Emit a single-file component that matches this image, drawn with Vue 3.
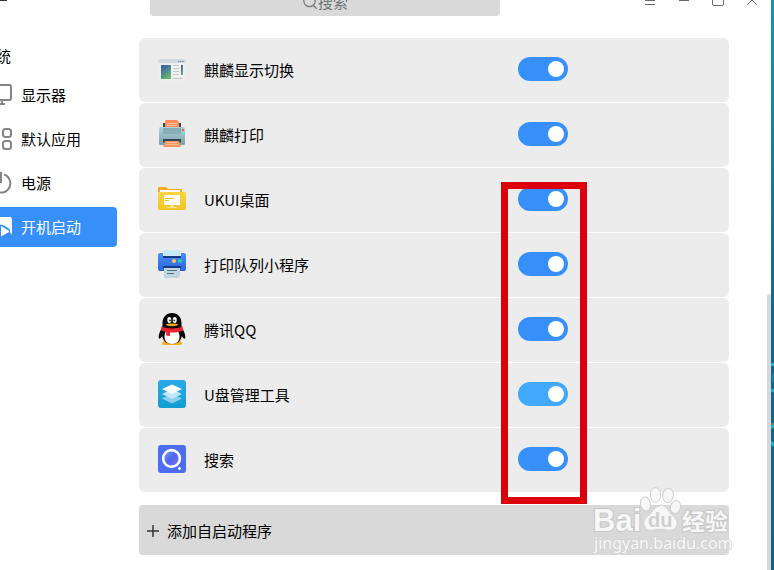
<script setup>
import { ref } from 'vue'

const navItems = [
  { id: 'display', label: '显示器' },
  { id: 'apps', label: '默认应用' },
  { id: 'power', label: '电源' },
  { id: 'boot', label: '开机启动', active: true },
]

const programs = ref([
  { id: 'kydisplay', name: '麒麟显示切换', on: true },
  { id: 'kyprint', name: '麒麟打印', on: true },
  { id: 'desktop', name: 'UKUI桌面', on: true },
  { id: 'queue', name: '打印队列小程序', on: true },
  { id: 'qq', name: '腾讯QQ', on: true },
  { id: 'udisk', name: 'U盘管理工具', on: true, hovered: true },
  { id: 'search', name: '搜索', on: true },
])

const query = ref('')
</script>

<template>
  <div class="desktop">
    <div class="window">
      <aside class="sidebar">
        <div class="menu-edge"></div>
        <h2 class="group-title">系统</h2>
        <nav class="nav">
          <a v-for="item in navItems" :key="item.id" href="#" class="nav-item" :class="{ active: item.active }">
            <svg v-if="item.id === 'display'" class="nav-icon" viewBox="0 0 20 24">
              <path d="M1 3.5a1.500 1.500 0 0 1 1.500-1.500h15a1.500 1.500 0 0 1 1.500 1.500v12a1.500 1.500 0 0 1-1.500 1.500h-15a1.500 1.500 0 0 1-1.500-1.500zM10 17v4M6 21h7" fill="none" stroke="#858585" stroke-width="2" />
            </svg>
            <svg v-else-if="item.id === 'apps'" class="nav-icon" viewBox="0 0 20 24">
              <g fill="none" stroke="#858585" stroke-width="2">
                <rect x="-1" y="2" width="8" height="8" rx="2.500" />
                <rect x="11" y="2" width="8" height="8" rx="2.500" />
                <rect x="-1" y="14" width="8" height="8" rx="2.500" />
                <rect x="11" y="14" width="8" height="8" rx="2.500" />
              </g>
            </svg>
            <svg v-else-if="item.id === 'power'" class="nav-icon" viewBox="0 0 20 24">
              <path d="M12 3.500a9.300 9.300 0 1 1-6 0M9 1v11" fill="none" stroke="#858585" stroke-width="2" />
            </svg>
            <svg v-else class="nav-icon" viewBox="0 0 20 24">
              <path d="M1 4a2 2 0 0 1 2-2h15a2 2 0 0 1 2 2v14c0 1.500-.6 2.500-2 3H3a2 2 0 0 1-2-2z" fill="#fff" />
              <path d="M0 14.500c3-4.500 7-5.500 10.500-4.500 3.500 1.200 6 3.200 9 6v6H0z" fill="#3790fa" />
              <path d="M9 11l7.500 4.500c.8.500.8 1.200 0 1.700L9 21.500z" fill="#fff" />
              <path d="M18 14.500L20 16v3l-2-1.500z" fill="#fff" />
            </svg>
            <span>{{ item.label }}</span>
          </a>
        </nav>
      </aside>

      <main class="content">
        <header class="topbar">
          <label class="search">
            <svg class="search-icon" viewBox="0 0 16 16">
              <path d="M11.500 11.500l3.200 3.200" stroke="#777" stroke-width="1.300" />
              <circle cx="7.500" cy="7" r="5.700" fill="none" stroke="#777" stroke-width="1.200" />
            </svg>
            <input v-model="query" class="search-input" type="text" placeholder="搜索" aria-label="搜索" />
          </label>
          <div class="controls">
            <button class="control" aria-label="菜单">
              <svg viewBox="0 0 12 12"><path d="M1 2.500h10M1 6.500h10M1 10.500h10" stroke="#6a6a6a" /></svg>
            </button>
            <button class="control" aria-label="最小化">
              <svg viewBox="0 0 12 12"><path d="M1 6.500h10" stroke="#6a6a6a" /></svg>
            </button>
            <button class="control" aria-label="最大化">
              <svg viewBox="0 0 12 12"><rect x=".5" y=".5" width="11" height="11" rx="1.500" fill="none" stroke="#6a6a6a" /></svg>
            </button>
            <button class="control" aria-label="关闭">
              <svg viewBox="0 0 12 12"><path d="M1 1l10 10M11 1L1 11" stroke="#6a6a6a" /></svg>
            </button>
          </div>
        </header>

        <section class="panel">
          <ul class="list">
            <li v-for="p in programs" :key="p.id" class="row">
              <svg v-if="p.id === 'kydisplay'" class="app-icon" viewBox="0 0 28 28">
                <defs>
                  <linearGradient id="gDisp" x1="0" y1="0" x2=".6" y2="1"><stop offset=".2" stop-color="#3c67a5" /><stop offset="1" stop-color="#67b86d" /></linearGradient>
                </defs>
                <path d="M1 8h26v18H1z" fill="#efefef" />
                <path d="M0 8V7a3 3 0 0 1 3-3h22a3 3 0 0 1 3 3v1z" fill="#d1d9e1" />
                <path d="M20 6.500h1.300M22.200 6.500h1.300M24.400 6.500h1.300" stroke="#61758d" stroke-width="1.200" />
                <path d="M3 10h10v14H3z" fill="url(#gDisp)" />
                <path d="M15 10.500h6M15 13.500h6M15 16.500h6M15 19.500h6M15 23.500h10" stroke="#c9c9c9" />
                <path d="M23 10h2v10h-2z" fill="url(#gDisp)" />
              </svg>
              <svg v-else-if="p.id === 'kyprint'" class="app-icon" viewBox="0 0 28 28">
                <defs>
                  <linearGradient id="gPrn" x1="0" y1="0" x2="0" y2="1"><stop stop-color="#b3d3d9" /><stop offset="1" stop-color="#78a0aa" /></linearGradient>
                </defs>
                <path d="M5 3h18v5H5z" fill="#334750" />
                <path d="M7 8V1.500A1.500 1.500 0 0 1 8.500 0H19l2 2v6z" fill="#ff8c5c" />
                <path d="M9 3.500h10M9 5.500h10" stroke="#ffc09e" />
                <path d="M1 8.500A1.500 1.500 0 0 1 2.500 7h23A1.500 1.500 0 0 1 27 8.500v15a1.500 1.500 0 0 1-1.500 1.500h-23A1.500 1.500 0 0 1 1 23.500z" fill="url(#gPrn)" />
                <path d="M5 8h18v6H5z" fill="#89adb6" />
                <path d="M24 9h2v2h-2z" fill="#ff5757" /><path d="M24 12h2v2h-2z" fill="#38ffd1" />
                <path d="M5 19h18v3l-2 2H7l-2-2z" fill="#334750" />
                <path d="M7 21h14l2 6H5z" fill="#ff965f" />
                <path d="M9 22.500h10M8 24.500h12" stroke="#ffc09e" />
              </svg>
              <svg v-else-if="p.id === 'desktop'" class="app-icon" viewBox="0 0 28 28">
                <defs>
                  <linearGradient id="gFold" x1="0" y1="0" x2="0" y2="1"><stop stop-color="#f9d541" /><stop offset="1" stop-color="#f2c325" /></linearGradient>
                </defs>
                <path d="M0 2h8l2 2h14v9H0z" fill="#f6a923" />
                <path d="M2 5h20v5H2z" fill="#fff" />
                <path d="M0 7h27a1 1 0 0 1 1 1v15a2 2 0 0 1-2 2H2a2 2 0 0 1-2-2z" fill="url(#gFold)" />
                <path d="M6 10h16v10H6z" fill="#fffdf2" />
                <path d="M7 13.500h9M7 15.500h4" stroke="#edbd22" />
                <path d="M12.500 20h3v2h-3zM9 22h10v1H9z" fill="#fbe69a" />
              </svg>
              <svg v-else-if="p.id === 'queue'" class="app-icon" viewBox="0 0 28 28">
                <defs>
                  <linearGradient id="gQueue" x1="0" y1="0" x2="0" y2="1"><stop stop-color="#4e8ff7" /><stop offset="1" stop-color="#2964dd" /></linearGradient>
                </defs>
                <path d="M2 3h3v4h18V3h3a2 2 0 0 1 2 2v14a2 2 0 0 1-2 2H2a2 2 0 0 1-2-2V5a2 2 0 0 1 2-2z" fill="url(#gQueue)" />
                <path d="M5 6h18v2H5zM5 16h18v2H5z" fill="#153b87" />
                <path d="M6 0h16v6H6z" fill="#c8e9f6" />
                <circle cx="16" cy="11" r="2.100" fill="#ffc653" /><circle cx="22" cy="11" r="2.100" fill="#20d5a1" />
                <path d="M6 18h16v8l-2 2H6z" fill="#bdd6df" />
                <path d="M9 20.500h10M9 23.500h7" stroke="#586d7d" />
              </svg>
              <svg v-else-if="p.id === 'qq'" class="app-icon tall" viewBox="0 0 28 32">
                <path d="M4 30.500c0-2 3-3 6-3h8c3 0 6 1 6 3 0 1-2 1.500-4 1.500H8c-2 0-4-.5-4-1.500z" fill="#f8ad15" />
                <path d="M14 0C8 0 4.500 4.500 4.500 10c0 2 0 4-.8 5.500C1.500 19 .5 22 .7 24.500c.2 2.200 1.800 1.500 3.500-1.500C5 28 8.500 31 14 31s9-3 9.800-8c1.700 3 3.300 3.700 3.500 1.500.2-2.500-.8-5.500-3-9-.8-1.500-.8-3.500-.8-5.500C23.500 4.500 20 0 14 0z" fill="#080808" />
                <path d="M14 16c-5 0-7.500 3-7.500 7.500S9 31 14 31s7.500-3 7.500-7.500S19 16 14 16z" fill="#fff" />
                <ellipse cx="11.300" cy="7" rx="2" ry="3" fill="#fff" /><ellipse cx="16.700" cy="7" rx="2" ry="3" fill="#fff" />
                <circle cx="12" cy="7.300" r=".9" fill="#111" /><circle cx="16.200" cy="7.300" r=".9" fill="#111" />
                <path d="M7.500 11.500c2-1.500 11-1.500 13 0-1.500 2.200-11.500 2.200-13 0z" fill="#f8ad15" />
                <path d="M3.500 13.500c6 2.500 15 2.500 21 0l.7 4c-4 1.800-8.700 2.300-13.200 2v3.500l-4-.5.300-3.500c-2-.4-4-1-5.500-1.800z" fill="#e9242e" />
              </svg>
              <svg v-else-if="p.id === 'udisk'" class="app-icon" viewBox="0 0 28 28">
                <defs>
                  <linearGradient id="gDisk" x1="0" y1="0" x2="0" y2="1"><stop stop-color="#2ba9e8" /><stop offset="1" stop-color="#139fd2" /></linearGradient>
                </defs>
                <rect width="28" height="28" rx="3" fill="url(#gDisk)" />
                <path d="M14 14l10 4.500L14 23.500 4 18.500z" fill="#8bd1ee" />
                <path d="M14 9l10 5-10 5-10-5z" fill="#c2e7f6" />
                <path d="M14 4.500L24 9l-10 5L4 9z" fill="#fff" />
              </svg>
              <svg v-else class="app-icon" viewBox="0 0 28 28">
                <defs>
                  <linearGradient id="gLens" x1="0" y1="0" x2="1" y2="1"><stop stop-color="#7f9cfb" /><stop offset=".5" stop-color="#5464ef" /><stop offset="1" stop-color="#7e74fa" /></linearGradient>
                </defs>
                <rect width="28" height="28" rx="3" fill="#4d6df0" />
                <circle cx="13.500" cy="13.500" r="8.400" fill="url(#gLens)" stroke="#fff" stroke-width="2.600" />
                <path d="M21.500 22v3M20 23.500h3" stroke="#fff" stroke-width="1.400" />
              </svg>
              <label class="row-name" :for="'sw-' + p.id">{{ p.name }}</label>
              <input :id="'sw-' + p.id" v-model="p.on" type="checkbox" class="switch" :class="{ hovered: p.hovered }" />
            </li>
          </ul>
          <div class="highlight-frame"></div>
          <button class="add">
            <svg class="plus" viewBox="0 0 12 12"><path d="M6 0v12M0 6h12" stroke="#333" stroke-width="1.500" /></svg>
            添加自启动程序
          </button>
          <svg class="watermark" viewBox="0 0 142 70" role="img" aria-label="Baidu 经验">
            <g fill="#f7f7f7" stroke="#cfcfcf" stroke-width="1">
              <ellipse cx="54.500" cy="19" rx="5" ry="7" transform="rotate(-12 54.500 19)" />
              <ellipse cx="64.500" cy="10" rx="5.300" ry="7.300" />
              <ellipse cx="77" cy="10.500" rx="5.300" ry="7" transform="rotate(10 77 10.500)" />
              <ellipse cx="84.500" cy="22" rx="5" ry="6.500" transform="rotate(15 84.500 22)" />
              <path d="M69 21c-6 0-7 6-11 9-4 3-6 6-5 10 1 5 6 6 10 5 4-1 8-1 12 0 5 1 10-1 11-5 1-5-3-8-6-11-3-4-5-9-11-9z" />
            </g>
            <g font-family="'Liberation Sans', Arial, sans-serif" font-weight="bold">
              <text x="2" y="46" font-size="31" fill="#f7f7f7" stroke="#c6c6c6" stroke-width="2" stroke-linejoin="round" paint-order="stroke">Bai</text>
              <text x="57" y="42" font-size="20" fill="#cfcfcf">du</text>
            </g>
            <text x="91" y="45" font-size="23" font-weight="bold" font-family="'Noto Sans CJK SC', sans-serif" fill="#f7f7f7" stroke="#c6c6c6" stroke-width="2" stroke-linejoin="round" paint-order="stroke">经验</text>
            <text x="3" y="64" font-size="16" font-family="'Noto Sans', sans-serif" fill="#fafafa" stroke="#cbcbcb" stroke-width="1" paint-order="stroke">jingyan.baidu.com</text>
          </svg>
        </section>
      </main>
      <div class="scrollbar"></div>
    </div>
    <div class="wallpaper">
      <svg viewBox="0 0 3 90" class="ripples">
        <path d="M0 2.500h3M0 28l3 1M0 66l3-3M0 80l3 4" stroke="#16b8c8" stroke-width="3" fill="none" />
        <path d="M3 12q-3 4 0 8" stroke="#138da5" stroke-width="1.500" fill="none" />
        <path d="M0 62h3" stroke="#8a7c62" stroke-width="1.500" />
      </svg>
    </div>
  </div>
</template>

<style>
body {
  margin: 0;
  background: #fff;
}
</style>

<style scoped>
* {
  box-sizing: border-box;
}
.desktop {
  display: flex;
  height: 100vh;
  overflow: hidden;
  font-family: "Noto Sans CJK SC", sans-serif;
  font-size: 15px;
  line-height: 24px;
  color: #000;
}
.window {
  position: relative;
  display: flex;
  flex: 1;
  min-width: 0;
  background: #fff;
}
.sidebar {
  width: 117px;
  flex: none;
  overflow: hidden;
}
.menu-edge {
  width: 7px;
  height: 1px;
  background: #333;
}
.group-title {
  margin: 43px 0 7px -19px;
  font-size: 15px;
  font-weight: 400;
  line-height: 24px;
}
.nav {
  display: flex;
  flex-direction: column;
  gap: 4px;
  margin-left: -20px;
}
.nav-item {
  display: flex;
  align-items: center;
  gap: 9px;
  height: 40px;
  padding-left: 12px;
  border-radius: 4px;
  color: #000;
  text-decoration: none;
}
.nav-item.active {
  background: #3790fa;
  color: #fff;
}
.nav-icon {
  width: 20px;
  height: 24px;
}
.content {
  flex: 1;
  min-width: 0;
  padding-left: 22px;
}
.topbar {
  display: flex;
  align-items: flex-end;
  justify-content: space-between;
  height: 16px;
  padding: 0 13px 0 11px;
}
.search {
  display: flex;
  flex: 0 0 350px;
  align-items: center;
  justify-content: center;
  height: 28px;
  border-radius: 4px;
  background: #d9d9d9;
}
.search-icon {
  width: 16px;
  height: 16px;
}
.search-input {
  width: 30px;
  height: 24px;
  padding: 0;
  border: 0;
  outline: 0;
  background: transparent;
  font: inherit;
  color: #333;
}
.search-input::placeholder {
  color: #6b7373;
  opacity: 1;
}
.controls {
  display: flex;
  gap: 22px;
  padding-bottom: 10px;
}
.control {
  display: flex;
  width: 12px;
  height: 12px;
  padding: 0;
  border: 0;
  background: none;
}
.control svg {
  width: 12px;
  height: 12px;
}
.panel {
  position: relative;
  padding-top: 22px;
  margin-right: 42px;
}
.list {
  display: flex;
  flex-direction: column;
  gap: 1px;
  margin: 0 0 13px;
  padding: 0;
  list-style: none;
}
.row {
  display: flex;
  align-items: center;
  height: 64px;
  padding: 0 161px 2px 19px;
  border-radius: 6px;
  background: #ececec;
}
.app-icon {
  width: 28px;
  height: 28px;
}
.app-icon.tall {
  height: 32px;
}
.row-name {
  padding: 2px 0 0 18px;
}
.switch {
  display: flex;
  align-items: center;
  justify-content: flex-end;
  width: 50px;
  height: 24px;
  margin: 0 0 0 auto;
  padding: 4px;
  border-radius: 12px;
  appearance: none;
  background: #b5b5b5;
}
.switch:checked {
  background: #3790fa;
}
.switch.hovered:checked {
  background: #40a9fb;
}
.switch::after {
  content: "";
  width: 16px;
  height: 16px;
  border-radius: 50%;
  background: #fff;
}
.switch:not(:checked) {
  justify-content: flex-start;
}
.highlight-frame {
  position: absolute;
  top: 166px;
  right: 142px;
  width: 86px;
  height: 322px;
  border: 7px solid #dc000d;
  pointer-events: none;
}
.add {
  display: flex;
  align-items: center;
  gap: 8px;
  width: 100%;
  height: 50px;
  padding: 2px 8px 0;
  border: 0;
  border-radius: 4px;
  background: #d9d9d9;
  font: inherit;
  color: #000;
}
.plus {
  width: 12px;
  height: 12px;
}
.watermark {
  position: absolute;
  right: -4px;
  bottom: 0;
  width: 142px;
  height: 70px;
  pointer-events: none;
}
.scrollbar {
  position: absolute;
  right: 0;
  bottom: 0;
  width: 4px;
  height: 276px;
  border-radius: 2px 2px 0 0;
  background: #d7d7d7;
}
.wallpaper {
  display: flex;
  flex-direction: column;
  justify-content: flex-end;
  width: 3px;
  padding-bottom: 118px;
  background: linear-gradient(#1598ad, #11698b 55%, #116486);
}
.ripples {
  width: 3px;
  height: 90px;
}
</style>
